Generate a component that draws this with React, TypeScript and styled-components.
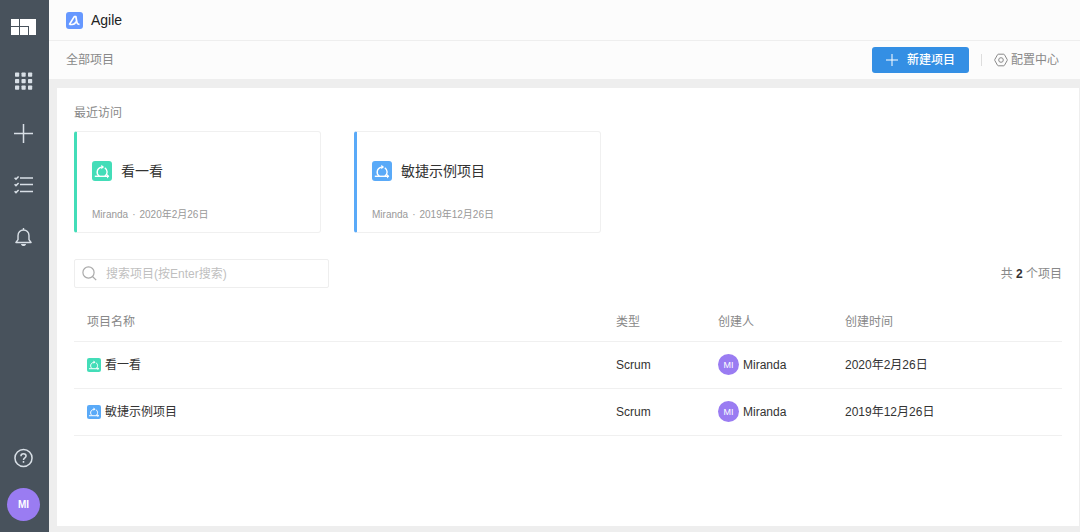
import React from 'react';
import styled, { createGlobalStyle } from 'styled-components';

const GlobalStyle = createGlobalStyle`
  *, *::before, *::after { box-sizing: border-box; }
  body {
    margin: 0;
    background: #eee;
    color: #333;
    font-family: "Liberation Sans", "Noto Sans CJK SC", sans-serif;
    font-size: 12px;
    line-height: 18px;
  }
  button, input { font: inherit; }
`;

const Page = styled.div`
  display: flex;
  min-height: 100vh;
`;

const Sidebar = styled.nav`
  display: flex;
  flex-direction: column;
  align-items: center;
  flex: none;
  width: 49px;
  padding: 19px 2px 11px 0;
  background: #48525c;
`;

const SideGroup = styled.div`
  display: flex;
  flex-direction: column;
  align-items: center;
  gap: 28px;
  margin-top: 34px;
`;

const SideFooter = styled.div`
  display: flex;
  flex-direction: column;
  align-items: center;
  gap: 18px;
  margin-top: auto;
`;

const IconButton = styled.button`
  display: flex;
  align-items: center;
  justify-content: center;
  width: 25px;
  height: 24px;
  padding: 0;
  border: 0;
  background: none;
  color: #d8dfe6;
  cursor: pointer;
`;

const AvatarButton = styled.button`
  width: 33px;
  height: 33px;
  padding: 0;
  border: 0;
  border-radius: 50%;
  background: #9a7cf2;
  color: #fff;
  font-size: 10px;
  font-weight: 700;
  cursor: pointer;
`;

const Main = styled.div`
  display: flex;
  flex-direction: column;
  flex: 1;
  min-width: 0;
`;

const Header = styled.header`
  display: flex;
  align-items: center;
  gap: 8px;
  height: 41px;
  padding: 0 17px;
  border-bottom: 1px solid #eee;
  background: #fcfcfc;
`;

const AppName = styled.h1`
  margin: 0;
  color: #222;
  font-size: 14px;
  font-weight: 400;
`;

const Toolbar = styled.div`
  display: flex;
  align-items: center;
  height: 38px;
  padding: 0 21px 0 17px;
  background: #fcfcfc;
  color: #888;
`;

const CreateButton = styled.button`
  display: flex;
  align-items: center;
  justify-content: center;
  gap: 9px;
  width: 97px;
  height: 26px;
  margin-left: auto;
  padding: 0;
  border: 0;
  border-radius: 3px;
  background: #348fe4;
  color: #fff;
  font-weight: 500;
  cursor: pointer;
`;

const Separator = styled.span`
  width: 1px;
  height: 12px;
  margin: 0 12px;
  background: #ddd;
`;

const ConfigLink = styled.a`
  display: flex;
  align-items: center;
  gap: 3px;
  color: #888;
  text-decoration: none;
`;

const Panel = styled.main`
  flex: 1;
  margin: 9px 1px 6px 8px;
  padding: 16px 17px;
  background: #fff;
`;

const SectionTitle = styled.h2`
  margin: 0 0 9px;
  color: #888;
  font-size: 12px;
  font-weight: 400;
`;

const Cards = styled.div`
  display: flex;
  flex-wrap: wrap;
  gap: 33px;
`;

const Card = styled.a<{ $accent: string }>`
  display: flex;
  flex-direction: column;
  justify-content: space-between;
  width: 247px;
  height: 102px;
  padding: 29px 14px 8px 15px;
  border: 1px solid #f0f0f0;
  border-left: 3px solid ${(p) => p.$accent};
  border-radius: 3px;
  color: #333;
  text-decoration: none;
`;

const CardTitle = styled.span`
  display: flex;
  align-items: center;
  gap: 9px;
  font-size: 14px;
  line-height: 20px;
`;

const CardMeta = styled.span`
  display: flex;
  gap: 4px;
  color: #999;
  font-size: 10px;
`;

const ListBar = styled.div`
  display: flex;
  align-items: center;
  justify-content: space-between;
  margin: 26px 0 15px;
`;

const SearchBox = styled.label`
  display: flex;
  align-items: center;
  gap: 9px;
  width: 255px;
  height: 29px;
  padding: 0 7px;
  border: 1px solid #eee;
  border-radius: 2px;
  color: #aaa;
`;

const SearchInput = styled.input`
  flex: 1;
  min-width: 0;
  padding: 0;
  border: 0;
  outline: 0;
  background: none;
  color: #333;
  &::placeholder { color: #bfbfbf; opacity: 1; }
`;

const Count = styled.span`
  color: #888;
`;

const CountValue = styled.strong`
  color: #333;
  font-weight: 700;
`;

const Table = styled.table`
  width: 100%;
  border-collapse: collapse;
  table-layout: fixed;
`;

const HeadCell = styled.th<{ $width?: number }>`
  width: ${(p) => (p.$width ? `${p.$width}px` : 'auto')};
  height: 38px;
  padding: 0 13px;
  border-bottom: 1px solid #f0f0f0;
  color: #888;
  font-weight: 400;
  text-align: left;
`;

const Cell = styled.td`
  height: 47px;
  padding: 0 13px;
  border-bottom: 1px solid #f0f0f0;
`;

const CellContent = styled.span`
  display: flex;
  align-items: center;
  gap: 4px;
`;

const Avatar = styled.span`
  display: flex;
  align-items: center;
  justify-content: center;
  width: 21px;
  height: 21px;
  border-radius: 50%;
  background: #9a7cf2;
  color: #fff;
  font-size: 9px;
`;

interface Project {
  name: string;
  type: string;
  creator: string;
  date: string;
  color: string;
}

const projects: Project[] = [
  { name: '看一看', type: 'Scrum', creator: 'Miranda', date: '2020年2月26日', color: '#43ddb8' },
  { name: '敏捷示例项目', type: 'Scrum', creator: 'Miranda', date: '2019年12月26日', color: '#5aaaf8' },
];

const ScrumIcon = ({ color, size }: { color: string; size: number }) => (
  <svg width={size} height={size} viewBox="0 0 20 20" fill="none" aria-hidden="true">
    <rect width="20" height="20" rx="3" fill={color} />
    <path d="M2.800 15.300h13.700" stroke="#fff" strokeWidth="1.400" />
    <path d="M7.300 15.100C3.900 12.500 4.500 7.200 9.800 6.100M12.800 6.800c3.200 2 3 6.500 0 8.300" stroke="#fff" strokeWidth="1.400" />
    <path d="M9.300 3.700l2.800 2.300-2.800 2.300zM15 13l2.300 2.300L15 17.500z" fill="#fff" />
  </svg>
);

const BrandIcon = () => (
  <svg width="25" height="16" viewBox="0 0 25 16" fill="#fff" aria-hidden="true">
    <path d="M0 0h8v7H0zM0 8h8v8H0zM9 8h8v8H9zM9 0h16v16h-7V7H9z" />
  </svg>
);

const AgileIcon = () => (
  <svg width="17" height="17" viewBox="0 0 17 17" fill="none" aria-hidden="true">
    <rect width="17" height="17" rx="3" fill="#6698ff" />
    <path d="M3.300 12.600L8.300 4.600h1.600l.9 5.400c.2 1.500 1 2.200 2.700 2.500" stroke="#fff" strokeWidth="1.700" strokeLinejoin="round" />
    <path d="M3.500 12.500h2.600c2 0 3.300-1 3.900-3" stroke="#fff" strokeWidth="1.500" />
  </svg>
);

const GridIcon = () => (
  <svg width="19" height="18" viewBox="0 0 19 18" fill="currentColor" aria-hidden="true">
    {[0.5, 7, 13.5].map((y) =>
      [1, 7.5, 14].map((x) => <rect key={`${x}-${y}`} x={x} y={y} width="4.2" height="4.2" rx="0.7" />),
    )}
  </svg>
);

const PlusIcon = ({ size, stroke }: { size: number; stroke: number }) => (
  <svg width={size} height={size} viewBox={`0 0 ${size} ${size}`} stroke="currentColor" strokeWidth={stroke} aria-hidden="true">
    <path d={`M0 ${size / 2}h${size}M${size / 2} 0v${size}`} />
  </svg>
);

const TaskIcon = () => (
  <svg width="19" height="20" viewBox="0 0 19 20" fill="none" stroke="currentColor" strokeWidth="1.500" aria-hidden="true">
    <path d="M6 3h13M6 9.500h13M6 16.500h13M.6 2.700l1.400 1.400 2.600-2.600M.6 9.200L2 10.600 4.600 8M.6 16.200L2 17.600 4.600 15" />
  </svg>
);

const BellIcon = () => (
  <svg width="17" height="20" viewBox="0 0 18 20" fill="none" stroke="currentColor" strokeWidth="1.500" strokeLinejoin="round" aria-hidden="true">
    <path d="M1 15.800h16l-2.200-3V8.400C14.800 5 12.200 2.500 9 2.500S3.200 5 3.200 8.400v4.400zM9 .500v2" />
    <path d="M6.300 17.300h5.400C11.400 18.700 10.300 19.500 9 19.500s-2.400-.8-2.700-2.200z" fill="currentColor" stroke="none" />
  </svg>
);

const HelpIcon = () => (
  <svg width="19" height="20" viewBox="0 0 20 20" fill="none" stroke="currentColor" strokeWidth="1.600" aria-hidden="true">
    <circle cx="10" cy="10" r="9" />
    <path d="M7.300 8.200c0-1.700 1.100-2.700 2.700-2.700s2.700 1 2.700 2.400c0 1.900-2.700 2-2.700 4.100M10 13.200v1.700" />
  </svg>
);

const ConfigIcon = () => (
  <svg width="14" height="14" viewBox="0 0 14 14" fill="none" stroke="currentColor" strokeWidth="1" strokeLinejoin="round" aria-hidden="true">
    <path d="M4.300 1.200h5.400q.5 0 .7.400l2.800 4.900q.3.500 0 1l-2.800 4.900q-.2.400-.7.400H4.300q-.5 0-.7-.4L.8 7.500q-.3-.5 0-1l2.800-4.900q.2-.4.7-.4z" />
    <circle cx="7" cy="7" r="2.300" />
  </svg>
);

const SearchIcon = () => (
  <svg width="15" height="15" viewBox="0 0 15 15" fill="none" stroke="currentColor" strokeWidth="1.200" aria-hidden="true">
    <circle cx="6.500" cy="6.500" r="5.600" />
    <path d="M10.500 10.500l3.700 3.700" />
  </svg>
);

export default function App() {
  return (
    <Page>
      <GlobalStyle />
      <Sidebar>
        <BrandIcon />
        <SideGroup>
          <IconButton aria-label="应用"><GridIcon /></IconButton>
          <IconButton aria-label="新建"><PlusIcon size={19} stroke={1.5} /></IconButton>
          <IconButton aria-label="任务"><TaskIcon /></IconButton>
          <IconButton aria-label="通知"><BellIcon /></IconButton>
        </SideGroup>
        <SideFooter>
          <IconButton aria-label="帮助"><HelpIcon /></IconButton>
          <AvatarButton>MI</AvatarButton>
        </SideFooter>
      </Sidebar>
      <Main>
        <Header>
          <AgileIcon />
          <AppName>Agile</AppName>
        </Header>
        <Toolbar>
          <span>全部项目</span>
          <CreateButton>
            <PlusIcon size={12} stroke={1} />
            新建项目
          </CreateButton>
          <Separator />
          <ConfigLink href="#config">
            <ConfigIcon />
            配置中心
          </ConfigLink>
        </Toolbar>
        <Panel>
          <SectionTitle>最近访问</SectionTitle>
          <Cards>
            {projects.map((p) => (
              <Card key={p.name} href="#project" $accent={p.color}>
                <CardTitle>
                  <ScrumIcon color={p.color} size={20} />
                  {p.name}
                </CardTitle>
                <CardMeta>
                  <span>{p.creator}</span>
                  <span>·</span>
                  <span>{p.date}</span>
                </CardMeta>
              </Card>
            ))}
          </Cards>
          <ListBar>
            <SearchBox>
              <SearchIcon />
              <SearchInput type="text" aria-label="搜索项目" placeholder="搜索项目(按Enter搜索)" />
            </SearchBox>
            <Count>共 <CountValue>2</CountValue> 个项目</Count>
          </ListBar>
          <Table>
            <thead>
              <tr>
                <HeadCell>项目名称</HeadCell>
                <HeadCell $width={102}>类型</HeadCell>
                <HeadCell $width={127}>创建人</HeadCell>
                <HeadCell $width={230}>创建时间</HeadCell>
              </tr>
            </thead>
            <tbody>
              {projects.map((p) => (
                <tr key={p.name}>
                  <Cell>
                    <CellContent>
                      <ScrumIcon color={p.color} size={14} />
                      {p.name}
                    </CellContent>
                  </Cell>
                  <Cell>{p.type}</Cell>
                  <Cell>
                    <CellContent>
                      <Avatar>MI</Avatar>
                      {p.creator}
                    </CellContent>
                  </Cell>
                  <Cell>{p.date}</Cell>
                </tr>
              ))}
            </tbody>
          </Table>
        </Panel>
      </Main>
    </Page>
  );
}
